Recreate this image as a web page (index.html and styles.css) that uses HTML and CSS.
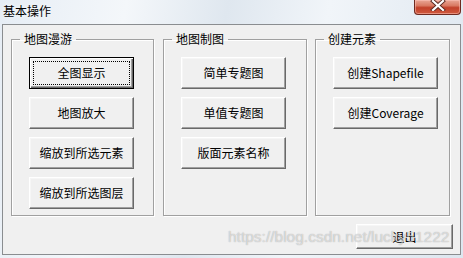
FILE: index.html
```html
<!DOCTYPE html>
<html lang="zh">
<head>
<meta charset="utf-8">
<title>基本操作</title>
<link rel="stylesheet" href="styles.css">
</head>
<body>
<div class="window">
  <div class="titlebar">
    <span class="title">基本操作</span>
    <button class="close" type="button" aria-label="关闭">
      <svg width="16" height="11" viewBox="0 0 16 11"><path d="M3 1 L13 10 M13 1 L3 10" stroke="#5a2a22" stroke-width="4" stroke-linecap="square"/><path d="M3 1 L13 10 M13 1 L3 10" stroke="#fff" stroke-width="2.2" stroke-linecap="square"/></svg>
    </button>
  </div>
  <div class="client">
    <div class="groups">
      <fieldset class="group g1">
        <legend>地图漫游</legend>
        <div class="stack">
          <button class="btn default" type="button">全图显示</button>
          <button class="btn" type="button">地图放大</button>
          <button class="btn" type="button">缩放到所选元素</button>
          <button class="btn" type="button">缩放到所选图层</button>
        </div>
      </fieldset>
      <fieldset class="group g2">
        <legend>地图制图</legend>
        <div class="stack">
          <button class="btn" type="button">简单专题图</button>
          <button class="btn" type="button">单值专题图</button>
          <button class="btn" type="button">版面元素名称</button>
        </div>
      </fieldset>
      <fieldset class="group g3">
        <legend>创建元素</legend>
        <div class="stack">
          <button class="btn" type="button">创建Shapefile</button>
          <button class="btn" type="button">创建Coverage</button>
        </div>
      </fieldset>
    </div>
    <div class="footer">
      <button class="btn exit" type="button">退出</button>
    </div>
  </div>
  <div class="watermark">https://blog.csdn.net/lucky51222</div>
</div>
</body>
</html>
```
FILE: styles.css
```css
html, body {
  margin: 0;
  padding: 0;
}
body {
  width: 463px;
  height: 258px;
  overflow: hidden;
  font-family: "Noto Sans CJK SC", "Noto Sans", sans-serif;
  font-size: 12px;
  color: #000;
}
.window {
  position: relative;
  width: 463px;
  height: 258px;
  box-sizing: border-box;
  background: linear-gradient(100deg, #e6edf5 0%, #f4f7fa 25%, #dfe7ef 45%, #f1f5f9 65%, #dde6ef 100%);
  display: flex;
  flex-direction: column;
}
.titlebar {
  height: 24px;
  display: flex;
  justify-content: space-between;
  align-items: flex-start;
}
.title {
  padding: 3px 0 0 3px;
  line-height: 16px;
  font-size: 12px;
  text-shadow: 0 0 6px rgba(255,255,255,0.9);
}
.close {
  width: 47px;
  height: 15px;
  margin: 0 2px 0 0;
  padding: 0;
  border: 1px solid #6e2a20;
  border-top: none;
  border-radius: 0 0 4px 4px;
  background: linear-gradient(#e9a796 0%, #d97a63 40%, #c2412a 55%, #cf5a3f 100%);
  box-shadow: inset 0 0 0 1px rgba(255,200,190,0.5);
  display: flex;
  align-items: center;
  justify-content: center;
}
.close svg {
  display: block;
  margin-top: -3px;
}
.client {
  margin: 0 2px 0 2px;
  height: 231px;
  box-sizing: border-box;
  border: 1px solid #8a8d90;
  background: #f0f0f0;
  padding: 6px 7px 0 8px;
  display: flex;
  flex-direction: column;
}
.groups {
  display: flex;
  align-items: flex-start;
}
.group {
  margin: 0;
  padding: 0;
  height: 185px;
  box-sizing: border-box;
  border: 1px solid #a0a0a0;
  box-shadow: inset 1px 1px 0 #fff, 1px 1px 0 #fff;
  min-inline-size: 0;
}
.g1 { width: 143px; margin-right: 9px; }
.g2 { width: 144px; margin-right: 8px; }
.g3 { width: 135px; }
.group legend {
  margin-left: 8px;
  padding: 0 4px;
  line-height: 16px;
  font-size: 12px;
}
.stack {
  padding: 10px 0 0 17px;
  display: flex;
  flex-direction: column;
  gap: 8px;
}
.btn {
  width: 105px;
  height: 32px;
  margin: 0;
  padding: 0;
  box-sizing: border-box;
  font-family: "Noto Sans CJK SC", "Noto Sans", sans-serif;
  font-size: 12px;
  color: #000;
  background: #f0f0f0;
  border: 1px solid;
  border-color: #fff #696969 #696969 #fff;
  box-shadow: inset -1px -1px 0 #a0a0a0, inset 1px 1px 0 #f6f6f6;
  border-radius: 0;
  line-height: 16px;
}
.btn.default {
  border-color: #000;
  box-shadow: inset 1px 1px 0 #fff, inset -1px -1px 0 #696969, inset -2px -2px 0 #a0a0a0;
  outline: 1px dotted #000;
  outline-offset: -5px;
}
.footer {
  display: flex;
  justify-content: flex-end;
  margin-top: 8px;
}
.btn.exit {
  width: 97px;
  height: 25px;
}
.watermark {
  position: absolute;
  left: 228px;
  top: 227px;
  font-family: "Liberation Sans", Arial, sans-serif;
  font-size: 15.5px;
  line-height: 20px;
  color: rgba(255,255,255,0.55);
  text-shadow: 0 0 1px rgba(0,0,0,0.35);
  pointer-events: none;
  white-space: nowrap;
}
```
